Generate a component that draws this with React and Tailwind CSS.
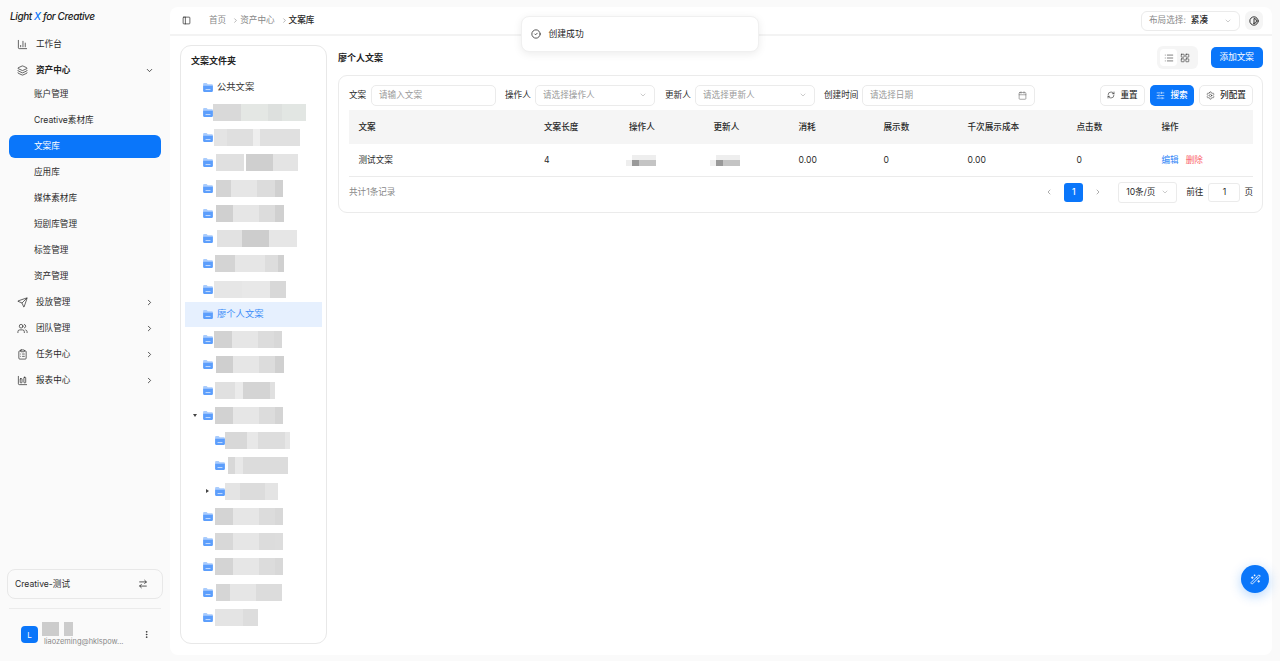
import React from "react";
import {
  ChartColumn, Layers, ChevronDown, ChevronRight, ChevronLeft, Send, Users, ClipboardList, ChartColumnBig,
  ArrowRightLeft, EllipsisVertical, PanelLeft, Contrast, RefreshCw, SlidersHorizontal, Settings, Calendar,
  CircleCheck, List, LayoutGrid, WandSparkles,
} from "lucide-react";

const FONT = "font-['Inter','Noto_Sans_CJK_SC',sans-serif]";

function Blur({ segs, ml = 0, h = 17 }) {
  return (
    <div className="flex shrink-0" style={{ marginLeft: ml, height: h }}>
      {segs.map(([w, c], i) => (
        <div key={i} style={{ width: w, backgroundColor: c }} />
      ))}
    </div>
  );
}

function Folder() {
  return (
    <svg viewBox="0 0 12 11" className="w-[10px] h-[9px] shrink-0">
      <path d="M0 1.5C0 .7.7 0 1.5 0h2.8l1.4 1.6h4.8c.8 0 1.5.7 1.5 1.5V3H0z" fill="#a9ccfd" />
      <path d="M0 3h12v6.5c0 .8-.7 1.5-1.5 1.5h-9C.7 11 0 10.300 0 9.500z" fill="#5c9efc" />
      <rect x="3" y="7.600" width="6" height="1" fill="#dbe9fe" />
    </svg>
  );
}

const tree = [
  { label: "公共文案" },
  { ml: 0, segs: [[28, "#d9d9d9"], [27, "#e4e7e4"], [14, "#dde0de"], [24, "#e2e6e3"]] },
  { ml: 1, segs: [[13, "#e4e4e4"], [26, "#dfdfdf"], [7, "#eeeeee"], [40, "#e0e0e0"]] },
  { ml: 3, segs: [[28, "#e0e0e0"], [2, "#ffffff"], [27, "#cfcfcf"], [25, "#e4e4e4"]] },
  { ml: 3, segs: [[15, "#d4d4d4"], [26, "#e6e6e6"], [18, "#dcdcdc"], [8, "#d0d0d0"]] },
  { ml: 3, segs: [[17, "#d0d0d0"], [26, "#e6e6e6"], [16, "#dcdcdc"], [9, "#d0d0d0"]] },
  { ml: 4, segs: [[25, "#e2e2e2"], [27, "#cdcdcd"], [28, "#e6e6e6"]] },
  { ml: 2, segs: [[20, "#d4d4d4"], [30, "#e6e6e6"], [13, "#dddddd"], [6, "#d0d0d0"]] },
  { ml: 1, segs: [[28, "#e6e6e6"], [28, "#e8e8e8"], [16, "#d8d8d8"]] },
  { label: "廖个人文案", active: true },
  { ml: 1, segs: [[18, "#d2d2d2"], [26, "#e6e6e6"], [16, "#dcdcdc"], [8, "#d8d8d8"]] },
  { ml: 3, segs: [[17, "#cfcfcf"], [26, "#e6e6e6"], [16, "#dcdcdc"], [9, "#d0d0d0"]] },
  { ml: 2, segs: [[20, "#e0e0e0"], [8, "#ebebeb"], [27, "#d4d4d4"], [5, "#e0e0e0"]] },
  { ml: 2, segs: [[18, "#d2d2d2"], [26, "#e6e6e6"], [16, "#dcdcdc"], [8, "#d4d4d4"]], arrow: "down" },
  { ml: 0, child: true, segs: [[22, "#d8d8d8"], [11, "#e8e8e8"], [27, "#dddddd"], [5, "#e6e6e6"]] },
  { ml: 3, child: true, segs: [[7, "#d8d8d8"], [8, "#e8e8e8"], [27, "#dcdcdc"], [18, "#dcdcdc"]] },
  { ml: 0, child: true, segs: [[15, "#e4e4e4"], [25, "#dcdcdc"], [13, "#e4e4e4"]], arrow: "right" },
  { ml: 2, segs: [[18, "#d4d4d4"], [26, "#e6e6e6"], [16, "#dcdcdc"], [8, "#d8d8d8"]] },
  { ml: 2, segs: [[18, "#d8d8d8"], [26, "#e6e6e6"], [16, "#dcdcdc"], [8, "#dddddd"]] },
  { ml: 2, segs: [[18, "#d4d4d4"], [26, "#e6e6e6"], [16, "#dcdcdc"], [8, "#d8d8d8"]] },
  { ml: 3, segs: [[14, "#d6d6d6"], [26, "#e6e6e6"], [14, "#dcdcdc"], [12, "#dcdcdc"]] },
  { ml: 2, segs: [[28, "#e4e4e4"], [15, "#dddddd"]] },
];

function SubItem({ children, active }) {
  return (
    <div className={`h-[23px] mb-[3px] rounded-md flex items-center pl-[25px] text-[8.6px] ${active ? "bg-[#0a76fa] text-white" : "text-[#2a2a2a]"}`}>
      {children}
    </div>
  );
}

function NavItem({ icon: Icon, label, open }) {
  return (
    <div className={`h-[23px] ${open ? "mb-[1.5px]" : "mb-[3px]"} flex items-center pl-[8px] pr-[7px] text-[8.6px] ${open ? "font-semibold text-[#222]" : "text-[#2a2a2a]"}`}>
      <Icon className="w-[11px] h-[11px] text-[#222] shrink-0" strokeWidth={1.5} />
      <span className="ml-[8px] flex-1">{label}</span>
      {open === undefined ? null : open ? (
        <ChevronDown className="w-[9px] h-[9px] text-[#222]" strokeWidth={2} />
      ) : (
        <ChevronRight className="w-[9px] h-[9px] text-[#222]" strokeWidth={2} />
      )}
    </div>
  );
}

function Sidebar() {
  return (
    <aside className="w-[170px] shrink-0 flex flex-col pl-[9px] pr-[9px] bg-[#fafafa]">
      <div className="h-[32.5px] flex items-center pl-[1px] text-[10px] tracking-[-0.4px] font-medium italic text-[#222] leading-none">
        <span>Light <span className="text-[#0a76fa]">X</span> for Creative</span>
      </div>
      <div>
        <NavItem icon={ChartColumn} label="工作台" />
        <NavItem icon={Layers} label="资产中心" open />
        <SubItem>账户管理</SubItem>
        <SubItem>Creative素材库</SubItem>
        <SubItem active>文案库</SubItem>
        <SubItem>应用库</SubItem>
        <SubItem>媒体素材库</SubItem>
        <SubItem>短剧库管理</SubItem>
        <SubItem>标签管理</SubItem>
        <SubItem>资产管理</SubItem>
        <NavItem icon={Send} label="投放管理" open={false} />
        <NavItem icon={Users} label="团队管理" open={false} />
        <NavItem icon={ClipboardList} label="任务中心" open={false} />
        <NavItem icon={ChartColumnBig} label="报表中心" open={false} />
      </div>
      <div className="mt-auto">
        <div className="h-[30px] -mx-[2px] rounded-lg border border-[#e8e8e8] bg-[#fafafa] flex items-center px-[7px] text-[8.6px] text-[#2a2a2a]">
          <span className="flex-1">Creative-测试</span>
          <ArrowRightLeft className="w-[10px] h-[10px] mr-[7px] text-[#222]" strokeWidth={1.8} />
        </div>
        <div className="h-px bg-[#ebebeb] mt-[9px]" />
        <div className="h-[52px] flex items-center pl-[12px] pr-[10px] pb-[1px]">
          <div className="w-[17px] h-[17px] rounded-[4px] bg-[#0a76fa] text-white text-[8px] flex items-center justify-center shrink-0">L</div>
          <div className="ml-[4px] flex-1 min-w-0">
            <div className="flex gap-[5px]">
              <div className="w-[17px] h-[14px] bg-[#cccccc]" />
              <div className="w-[9px] h-[14px] bg-[#cccccc]" />
            </div>
            <div className="mt-[1.5px] text-[7.4px] text-[#888] leading-[10px] ml-[2px] whitespace-nowrap">liaozeming@hklspow...</div>
          </div>
          <EllipsisVertical className="w-[9px] h-[9px] text-[#222]" strokeWidth={2} />
        </div>
      </div>
    </aside>
  );
}

function Tree() {
  return (
    <div className="w-[147px] h-[599px] shrink-0 rounded-[11px] border border-[#e8e8e8] bg-white px-[4px]">
      <div className="h-[30px] flex items-center pl-[6px] text-[9px] font-semibold text-[#222]">文案文件夹</div>
      <div className="-mt-[1.5px]">
        {tree.map((r, i) => (
          <div key={i} className={`h-[25.25px] flex items-center relative ${r.child ? "pl-[30px]" : "pl-[18px]"} ${r.active ? "bg-[#e6f0fe]" : ""}`}>
            {r.arrow === "down" && <span className="absolute left-[8px] w-0 h-0 border-x-[2.500px] border-x-transparent border-t-[3px] border-t-[#444]" />}
            {r.arrow === "right" && <span className="absolute left-[21px] w-0 h-0 border-y-[2.500px] border-y-transparent border-l-[3px] border-l-[#444]" />}
            <Folder />
            {r.label ? (
              <span className={`ml-[4px] text-[9.300px] ${r.active ? "text-[#3b8cf8]" : "text-[#333]"}`}>{r.label}</span>
            ) : (
              <Blur segs={r.segs} ml={r.ml} />
            )}
          </div>
        ))}
      </div>
    </div>
  );
}

function Field({ label, placeholder, width, select, calendar, labelW }) {
  return (
    <div className="flex items-center shrink-0">
      <span className="text-[8.600px] text-[#2a2a2a] whitespace-nowrap" style={{ width: labelW }}>{label}</span>
      <div className="h-[21px] rounded-[5px] border border-[#ebebeb] bg-white flex items-center pl-[7px] pr-[7px]" style={{ width }}>
        <span className="flex-1 text-[8.600px] text-[#999]">{placeholder}</span>
        {select && <ChevronDown className="w-[8px] h-[8px] text-[#999]" strokeWidth={1.5} />}
        {calendar && <Calendar className="w-[9px] h-[9px] text-[#666]" strokeWidth={1.5} />}
      </div>
    </div>
  );
}

const cols = [
  { t: "文案", w: 185.5 },
  { t: "文案长度", w: 85 },
  { t: "操作人", w: 84.500 },
  { t: "更新人", w: 85 },
  { t: "消耗", w: 85 },
  { t: "展示数", w: 84 },
  { t: "千次展示成本", w: 109 },
  { t: "点击数", w: 85 },
  { t: "操作", w: 90 },
];

function MiniBlur({ shift }) {
  return (
    <div className="flex flex-col w-[30px]" style={{ marginLeft: shift }}>
      <div className="flex h-[5px]"><div className="w-[6px]" /><div className="w-[24px] bg-[#eeeeee]" /></div>
      <div className="flex h-[6px]"><div className="w-[6px] bg-[#eeeeee]" /><div className="w-[7px] bg-[#999999]" /><div className="w-[17px] bg-[#c4c4c4]" /></div>
    </div>
  );
}

function Table() {
  return (
    <div>
      <div className="h-[34px] bg-[#f5f5f5] flex items-center pl-[9.500px]">
        {cols.map((c) => (
          <div key={c.t} className="shrink-0 text-[8.600px] font-medium text-[#2a2a2a]" style={{ width: c.w }}>{c.t}</div>
        ))}
      </div>
      <div className="h-[33px] border-b border-[#ebebeb] flex items-center pl-[9.500px] text-[8.600px] text-[#2a2a2a]">
        <div className="w-[185.5px] shrink-0">测试文案</div>
        <div className="w-[85px] shrink-0">4</div>
        <div className="w-[84.500px] shrink-0"><MiniBlur shift={-3} /></div>
        <div className="w-[85px] shrink-0"><MiniBlur shift={-4} /></div>
        <div className="w-[85px] shrink-0">0.00</div>
        <div className="w-[84px] shrink-0">0</div>
        <div className="w-[109px] shrink-0">0.00</div>
        <div className="w-[85px] shrink-0">0</div>
        <div className="flex gap-[7px]">
          <span className="text-[#2f84f7]">编辑</span>
          <span className="text-[#fa5a63]">删除</span>
        </div>
      </div>
    </div>
  );
}

function Content() {
  return (
    <div className="flex-1 min-w-0 ml-[11px]">
      <div className="h-[30px] flex items-center pb-[5px]">
        <span className="text-[9px] font-semibold text-[#222] flex-1">廖个人文案</span>
        <div className="h-[23px] w-[41px] rounded-md bg-[#f5f5f5] flex items-center pl-[3px] mr-[12.500px]">
          <div className="w-[17px] h-[17px] bg-white rounded-[4px] flex items-center justify-center">
            <List className="w-[10px] h-[10px] text-[#333]" strokeWidth={1.5} />
          </div>
          <LayoutGrid className="w-[10px] h-[10px] text-[#333] ml-[3px]" strokeWidth={1.5} />
        </div>
        <div className="w-[52.500px] h-[21px] rounded-[5px] bg-[#0a76fa] text-white text-[8.600px] flex items-center justify-center">添加文案</div>
      </div>
      <div className="rounded-[9px] border border-[#ebebeb] pl-[10px] pr-[9px] h-[138px]">
        <div className="h-[34px] pt-[8.5px] flex items-start">
          <Field label="文案" placeholder="请输入文案" labelW={22} width={125} />
          <div className="w-[9px]" />
          <Field label="操作人" placeholder="请选择操作人" labelW={30} width={120} select />
          <div className="w-[10px]" />
          <Field label="更新人" placeholder="请选择更新人" labelW={30} width={120} select />
          <div className="w-[9px]" />
          <Field label="创建时间" placeholder="请选择日期" labelW={38} width={173} calendar />
          <div className="flex-1" />
          <div className="h-[21px] w-[45px] rounded-[5px] border border-[#ebebeb] flex items-center justify-center gap-[5px] text-[8.600px] font-medium text-[#2a2a2a]">
            <RefreshCw className="w-[8px] h-[8px]" strokeWidth={1.8} />重置
          </div>
          <div className="h-[21px] w-[44px] ml-[5px] rounded-[5px] bg-[#0a76fa] text-white flex items-center justify-center gap-[5px] text-[8.600px] font-medium">
            <SlidersHorizontal className="w-[9px] h-[9px]" strokeWidth={1.6} />搜索
          </div>
          <div className="h-[21px] w-[54px] ml-[5px] rounded-[5px] border border-[#ebebeb] flex items-center justify-center gap-[5px] text-[8.600px] font-medium text-[#2a2a2a]">
            <Settings className="w-[9px] h-[9px]" strokeWidth={1.4} />列配置
          </div>
        </div>
        <Table />
        <div className="h-[30px] flex items-center text-[8.600px] text-[#2a2a2a]">
          <span className="text-[#888] flex-1">共计1条记录</span>
          <ChevronLeft className="w-[8px] h-[8px] text-[#666]" strokeWidth={1.6} />
          <div className="w-[19px] h-[19px] ml-[11px] rounded-[3px] bg-[#0a76fa] text-white flex items-center justify-center font-medium">1</div>
          <ChevronRight className="w-[8px] h-[8px] text-[#666] ml-[11px]" strokeWidth={1.6} />
          <div className="w-[59px] h-[21px] ml-[16px] rounded-[3px] border border-[#ebebeb] flex items-center justify-between px-[7px]">
            <span>10条/页</span>
            <ChevronDown className="w-[8px] h-[8px] text-[#999]" strokeWidth={1.5} />
          </div>
          <span className="ml-[9px]">前往</span>
          <div className="w-[32px] h-[19px] ml-[5px] rounded-[3px] border border-[#ebebeb] flex items-center justify-center">1</div>
          <span className="ml-[4px]">页</span>
        </div>
      </div>
    </div>
  );
}

export default function App() {
  return (
    <div className={`relative h-[661px] w-[1280px] flex overflow-hidden bg-[#fafafa] ${FONT}`}>
      <Sidebar />
      <main className="flex-1 min-w-0 mt-[7px] mb-[6px] mr-[8px] rounded-lg bg-white flex flex-col">
        <header className="h-[29px] shrink-0 border-b-2 border-[#f3f3f3] flex items-center pl-[12px] pr-[9px]">
          <PanelLeft className="w-[9px] h-[9px] text-[#222]" strokeWidth={1.8} />
          <div className="ml-[18px] flex items-center text-[8.600px] text-[#888]">
            <span>首页</span>
            <ChevronRight className="w-[7px] h-[7px] ml-[6px] mr-[1px] text-[#666]" strokeWidth={1.6} />
            <span>资产中心</span>
            <ChevronRight className="w-[7px] h-[7px] ml-[6px] mr-[1px] text-[#666]" strokeWidth={1.6} />
            <span className="text-[#2a2a2a] font-medium">文案库</span>
          </div>
          <div className="flex-1" />
          <div className="w-[99px] h-[20px] rounded-md border border-[#ebebeb] flex items-center pl-[7px] pr-[7px] text-[8.600px]">
            <span className="text-[#888]">布局选择:</span>
            <span className="ml-[5px] font-medium text-[#2a2a2a] flex-1">紧凑</span>
            <ChevronDown className="w-[8px] h-[8px] text-[#999]" strokeWidth={1.5} />
          </div>
          <div className="w-[18px] h-[19px] ml-[5px] rounded-md bg-[#f5f5f5] flex items-center justify-center">
            <Contrast className="w-[10px] h-[10px] text-[#222]" strokeWidth={2.2} />
          </div>
        </header>
        <div className="flex pl-[10px] pr-[9px] pt-[9px]">
          <Tree />
          <Content />
        </div>
      </main>
      <div className="absolute left-[521px] top-[16px] w-[238px] h-[36px] rounded-lg bg-white border border-[#f0f0f0] shadow-[0_2px_8px_rgba(0,0,0,0.08)] flex items-center pl-[8.500px] text-[8.800px] text-[#222]">
        <CircleCheck className="w-[10px] h-[10px] text-[#222]" strokeWidth={1.8} />
        <span className="ml-[8px]">创建成功</span>
      </div>
      <div className="absolute left-[1241px] top-[565px] w-[28px] h-[28px] rounded-full bg-[#0a76fa] shadow-[0_3px_12px_rgba(10,118,250,0.3)] flex items-center justify-center">
        <WandSparkles className="w-[11px] h-[11px] text-white" strokeWidth={1.8} />
      </div>
    </div>
  );
}
